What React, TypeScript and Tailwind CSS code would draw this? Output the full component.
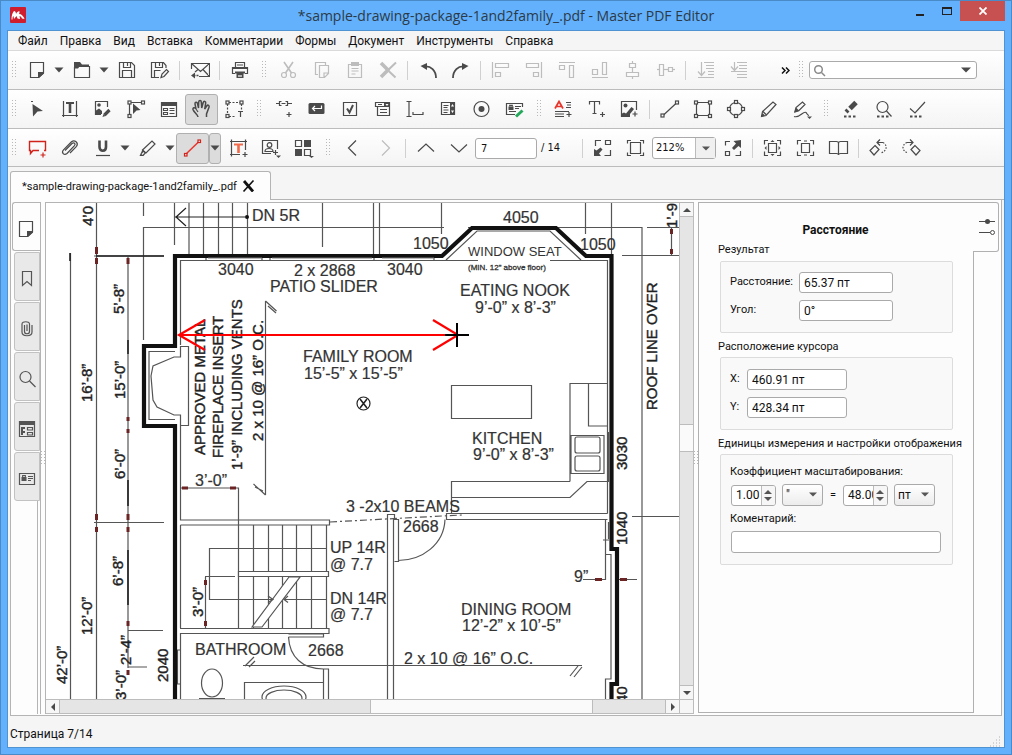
import type { ReactNode } from "react";

interface IconProps {
  children: ReactNode;
}

interface ToolProps {
  label: string;
  icon: ReactNode;
  active?: boolean;
  disabled?: boolean;
}

function Icon({ children }: IconProps) {
  return (
    <svg className="h-[20px] w-[21px]" viewBox="0 0 21 20" fill="none" stroke="currentColor" strokeWidth={1.2} aria-hidden="true">
      {children}
    </svg>
  );
}

function Tool({ label, icon, active, disabled }: ToolProps) {
  return (
    <button
      type="button"
      aria-label={label}
      disabled={disabled}
      className={
        active
          ? "flex h-[31px] w-[33px] shrink-0 items-center justify-center rounded-[3px] border border-[#b0b0b0] bg-[#dcdcdc] text-[#4a4a4a]"
          : "flex h-[31px] w-[33px] shrink-0 items-center justify-center text-[#4a4a4a] disabled:text-[#bdbdbd]"
      }
    >
      {icon}
    </button>
  );
}

function Caret() {
  return (
    <svg className="h-[6px] w-[10px]" viewBox="0 0 10 6" aria-hidden="true">
      <path d="M0 0.5h10L5 5.5z" fill="#4a4a4a" />
    </svg>
  );
}

function Drop({ label, active }: { label: string; active?: boolean }) {
  return (
    <button
      type="button"
      aria-label={label}
      className={
        active
          ? "flex h-[31px] w-[12px] shrink-0 items-center justify-center rounded-[3px] border border-[#b0b0b0] bg-[#dcdcdc]"
          : "flex h-[31px] w-[12px] shrink-0 items-center justify-center"
      }
    >
      <svg className="h-[6px] w-[10px] shrink-0" viewBox="0 0 10 6" aria-hidden="true">
        <path d="M0.5 0.5h9L5 5.5z" fill="#4a4a4a" />
      </svg>
    </button>
  );
}

function Separator() {
  return (
    <div className="flex w-[7px] shrink-0 justify-center">
      <div className="h-[19px] w-px bg-[#d0d0d0]" />
    </div>
  );
}

function Dots({ height }: { height: number }) {
  const rows = Math.floor(height / 3);
  return (
    <svg width={4} height={height} aria-hidden="true">
      {Array.from({ length: rows }, (_, i) => (
        <path key={i} d={`M0 ${i * 3 + 0.5}h1M3 ${i * 3 + 0.5}h1`} stroke="#b8b8b8" />
      ))}
    </svg>
  );
}

function Handle({ first }: { first?: boolean }) {
  return (
    <div className={first ? "flex w-[12px] shrink-0 justify-center" : "flex w-[16px] shrink-0 justify-center"}>
      <Dots height={18} />
    </div>
  );
}

const plus = (x: number, y: number, color = "currentColor") => (
  <path d={`M${x - 2.5} ${y}h5M${x} ${y - 2.5}v5`} stroke={color} />
);

const node = (x: number, y: number) => (
  <rect x={x - 1.5} y={y - 1.5} width={3} height={3} fill="#fafafa" strokeWidth={1.2} />
);

const threeDots = <path d="M4 17.5h2.5M8.5 17.5H11M13 17.5h2.5" strokeWidth={1.8} />;

const icons = {
  page: (
    <Icon>
      <path d="M4.5 2.5h13v10.5l-5 4.5h-8z" />
      <path d="M12 12h6v1.5L13 18h-1z" fill="currentColor" stroke="none" />
    </Icon>
  ),
  folder: (
    <Icon>
      <path d="M3.5 7v10.5h15V6.5H8" />
      <path d="M3 2h6l2 2.5h7V6H9L7 8.5H3z" fill="currentColor" stroke="none" />
    </Icon>
  ),
  save: (
    <Icon>
      <path d="M3.5 2.5h12l3 3v12h-15zM6.5 17.5v-7h9v7" />
      <path d="M7.5 2.5v5h7v-5M11.5 3v3" />
    </Icon>
  ),
  saveAs: (
    <Icon>
      <path d="M10 17.5H2.5v-15h12l2.5 3V8M5.5 17.5v-7h6M6.5 2.5v5h7v-5M10.5 3v3" />
      <path d="M12 17.5l1-3.5 4.5-4.5 2 2-4.5 5z" />
    </Icon>
  ),
  mail: (
    <Icon>
      <path d="M2.5 9V3.5h18v13H10M2.5 3.5l9 8 9-8M14 9.5l6 6.5M9 9.5l-3 2.5" />
      <path d="M9.5 15.5H5" strokeDasharray="2 1" strokeWidth={1.6} />
      <path d="M2 15.5l4-3v6z" fill="currentColor" stroke="none" />
    </Icon>
  ),
  print: (
    <Icon>
      <path d="M6.5 7V2.5h9V7M6 13.5H3.5v-6h15v6H16M8 5h6" />
      <path d="M3 7h16v2H3zM6 11.5h10v2H6zM7.5 13h7v5h-7z" fill="currentColor" stroke="none" />
      <path d="M9 16h4" stroke="#fff" />
    </Icon>
  ),
  cut: (
    <Icon>
      <circle cx={6} cy={15} r={2.5} />
      <circle cx={15} cy={15} r={2.5} />
      <path d="M6 2l7.5 11M15 2L7.5 13" strokeWidth={1.6} />
    </Icon>
  ),
  copy: (
    <Icon>
      <path d="M7 14.5H4.5v-12h10V5" />
      <path d="M8.5 5.5h9v8l-4 4h-5zM17 13h-4v4" />
    </Icon>
  ),
  paste: (
    <Icon>
      <path d="M4.5 4.5h13v13h-13zM7.5 8.5h7M7.5 11h7M7.5 14h4" />
      <path d="M7 2h8v4H7z" fill="currentColor" stroke="none" />
    </Icon>
  ),
  remove: (
    <Icon>
      <path d="M4 3l8 8M4 17l6-6" strokeWidth={3.6} />
      <path d="M9 8.5l9.5 9M19 2.5L9 12" strokeWidth={2} />
    </Icon>
  ),
  undo: (
    <Icon>
      <path d="M7 6.5c7-1 12 4 12 11.5" strokeWidth={1.8} />
      <path d="M3.5 6L10 3v7z" fill="currentColor" stroke="none" />
    </Icon>
  ),
  redo: (
    <Icon>
      <path d="M15 6.5c-7-1-12 4-12 11.5" strokeWidth={1.8} />
      <path d="M18.5 6L12 3v7z" fill="currentColor" stroke="none" />
    </Icon>
  ),
  alignLeft: (
    <Icon>
      <path d="M2.5 2v16M5.5 3.5h13v4h-13zM5.5 12.5h5v4h-5z" />
    </Icon>
  ),
  alignRight: (
    <Icon>
      <path d="M18.5 2v16M3.5 3.5h12v4h-12zM10.5 12.5h5v4h-5z" />
    </Icon>
  ),
  alignTop: (
    <Icon>
      <path d="M3 2.5h16M3.5 5.5h5v4h-5zM13.5 5.5h4v12h-4z" />
    </Icon>
  ),
  alignBottom: (
    <Icon>
      <path d="M3 17.5h16M3.5 9.5h5v5h-5zM13.5 2.5h4v12h-4z" />
    </Icon>
  ),
  centerH: (
    <Icon>
      <path d="M10.5 1v18" />
      <path d="M7.5 3.5h6v4h-6zM4.5 12.5h12v4h-12z" fill="#fafafa" />
    </Icon>
  ),
  centerV: (
    <Icon>
      <path d="M2 9.5h18" />
      <path d="M4.5 4.5h4v11h-4zM13.5 7.5h4v4h-4z" fill="#fafafa" />
    </Icon>
  ),
  orderDown: (
    <Icon>
      <path d="M6.5 2v13M3 11.5l3.5 4 3.5-4M3 17.5h16M9 2.5h10M11 5.5h8M11 8.5h8M13 11.5h6M13 14.5h6" />
    </Icon>
  ),
  orderUp: (
    <Icon>
      <path d="M6.5 2v8M3 6.5l3.5 4 3.5-4M9 2.5h10M11 5.5h8M11 8.5h8M3 11.5h16M9 14.5h10M9 17.5h10" />
    </Icon>
  ),
  pointer: (
    <Icon>
      <path d="M6.5 5l10.5 7-5.5.5-4.5 5z" fill="currentColor" stroke="none" />
      <path d="M5 2.5h2" />
    </Icon>
  ),
  editText: (
    <Icon>
      <path d="M4.5 2v16M17.5 2v16M3 16.5h16" />
      <path d="M7 4h8" strokeWidth={2} />
      <path d="M11 3v11" strokeWidth={2.6} />
    </Icon>
  ),
  editImage: (
    <Icon>
      <path d="M9 15.5H3.5v-13h12V8" />
      <circle cx={7} cy={6} r={1.8} fill="currentColor" stroke="none" />
      <path d="M4 15v-3.5l3-2 3 2.5v3z" fill="currentColor" stroke="none" />
      <path d="M12.5 16l5-5" strokeWidth={3.2} />
      <path d="M10.5 18l1-3 2 2z" fill="currentColor" stroke="none" />
    </Icon>
  ),
  editPath: (
    <Icon>
      <path d="M4.5 5v11M6 3.5h12" />
      {node(4.5, 3.5)}
      {node(18, 3.5)}
      {node(4.5, 17)}
      <path d="M8 4.5l7.5 6.5-4 .5L8 15z" fill="currentColor" stroke="none" />
    </Icon>
  ),
  editForm: (
    <Icon>
      <path d="M3.5 3.5h15v14h-15z" />
      <path d="M3 3h16v4H3z" fill="currentColor" stroke="none" />
      <path d="M5.5 9.5h4v2h-4zM5.5 13.5h4v2h-4zM11.5 9.5h5M11.5 11.5h5M11.5 14.5h5" strokeWidth={1.1} />
    </Icon>
  ),
  hand: (
    <Icon>
      <path
        d="M7 18c0-2-4-4.5-5-7.5-.5-2 2-2.5 3-.5L4 5c-.2-2 2-2.5 2.500-.5L7.500 9 7.700 3c.2-2 2.500-2 2.600 0l.4 6 1.500-5.500c.6-1.900 2.700-1.200 2.500.5L13.700 10l2-3c1.200-1.700 3-.5 2.300 1.200L15.500 15v3"
        strokeWidth={1.5}
      />
      <path d="M5 10l2 3" />
    </Icon>
  ),
  marquee: (
    <Icon>
      <path d="M5 3.5h11M5 17.5h6M3.5 5v11M17.5 5v6" strokeDasharray="2 1.5" />
      {node(3.5, 3.5)}
      {node(17.5, 3.5)}
      {node(3.5, 17)}
      <path d="M14 12.5h5M16.5 12.5V18" />
    </Icon>
  ),
  linkTool: (
    <Icon>
      <path d="M3 4.5h3M8.5 2.5H6.5v4h2M12.5 2.5h2v4h-2M8.5 4.5h4M15 4.5h4" />
      {plus(16, 15.5)}
    </Icon>
  ),
  pushButton: (
    <Icon>
      <rect x={2.5} y={4} width={16} height={11} rx={1.5} fill="currentColor" stroke="none" />
      <path d="M15.5 6.5v3H6.5M9 7L6.5 9.5 9 12" stroke="#fff" />
    </Icon>
  ),
  checkField: (
    <Icon>
      <path d="M4.5 3.5h13v13h-13z" />
      <path d="M8 9.5l2.5 4L14 6" strokeWidth={2} />
    </Icon>
  ),
  comboField: (
    <Icon>
      <path d="M3.5 3.5h14v4h-14zM5.5 7.5h12v9h-12zM8 10.5h7M8 13.5h7M6 5.5h4" />
      <path d="M12 3h6v5h-6z" fill="currentColor" stroke="none" />
      <path d="M13.5 5h3L15 7z" fill="#fff" stroke="none" />
    </Icon>
  ),
  textField: (
    <Icon>
      <path d="M1.5 2.5h5M1.5 17.5h5M4 2.5v15M8 13v2.5h10V13" />
    </Icon>
  ),
  listField: (
    <Icon>
      <path d="M3.5 3.5h13v12h-13zM5.5 6.5h5M5.5 8.5h4M5.5 11h5M5.5 13.5h4" />
      <path d="M12 3h5v13h-5z" fill="currentColor" stroke="none" />
      <path d="M13 7.5h3L14.5 5zM13 11.5h3L14.5 14z" fill="#fff" stroke="none" />
    </Icon>
  ),
  radioField: (
    <Icon>
      <circle cx={10.5} cy={10} r={7.5} />
      <circle cx={10.5} cy={10} r={3} fill="currentColor" stroke="none" />
    </Icon>
  ),
  signField: (
    <Icon>
      <path d="M11 15.5H2.5v-11h16V8M11 7.5h6M11 9.5h4M5 12.5h7" />
      <path d="M4.5 7.5h5V11h-5z" fill="currentColor" stroke="none" />
      <path d="M5.7 7.5V6.3h2.6v1.2" />
      <path d="M12 17.5l6.5-6" stroke="#23a85c" strokeWidth={3} />
    </Icon>
  ),
  insertText: (
    <Icon>
      <path d="M2 9.5l4-7 4 7M3.5 7.5h5" stroke="#e8352c" strokeWidth={1.7} />
      <path d="M13 3.5h5M14 6h4M13 8.5h5M2 12.5h14M2 15h9M2 17.5h9" />
      {plus(16, 15.5)}
    </Icon>
  ),
  addText: (
    <Icon>
      <path d="M3.5 5.5v-3h10v3M8.5 2.5v12M6.5 14.5h4" />
      {plus(16.5, 15.5)}
    </Icon>
  ),
  addImage: (
    <Icon>
      <path d="M11 17.5H2.5v-15h15V11" />
      <circle cx={6.5} cy={6.5} r={2} fill="currentColor" stroke="none" />
      <path d="M3 17v-2.5l2-1 2 1L12.5 8l2.5 2-4 5v2z" fill="currentColor" stroke="none" />
      {plus(16, 15)}
    </Icon>
  ),
  line: (
    <Icon>
      <path d="M4 16.5L18 3.5" />
      {node(3.5, 16.5)}
      {node(18, 3.5)}
    </Icon>
  ),
  rect: (
    <Icon>
      <path d="M4.5 3.5h13v13h-13z" />
      {node(4, 3.5)}
      {node(18, 3.5)}
      {node(4, 17)}
      {node(18, 17)}
    </Icon>
  ),
  ellipse: (
    <Icon>
      <circle cx={11} cy={10} r={6.5} />
      {node(11, 3)}
      {node(11, 17)}
      {node(4, 10)}
      {node(18, 10)}
    </Icon>
  ),
  pencil: (
    <Icon>
      <path d="M3.5 17.5l1-5L15 3l3 2.5L8 16.5zM5 12.5l3 3" />
      <path d="M3 18l1.500-4 2.500 2.500z" fill="currentColor" stroke="none" />
    </Icon>
  ),
  ink: (
    <Icon>
      <path d="M4 12.5l1-4L11.5 3 14 5.5l-6 6zM3 17.5c6 2 9-6 12-4 1.500 1 .5 2.500 3 3" />
      <path d="M3 14l2-5.5L8.5 12z" fill="currentColor" stroke="none" />
      <path d="M16 17.5h5l-2.5 2.5z" fill="currentColor" stroke="none" />
    </Icon>
  ),
  eraser: (
    <Icon>
      <path d="M10 9.5l6-6" strokeWidth={5} />
      <path d="M5.5 10.5l3 3" strokeWidth={2.6} />
      {threeDots}
    </Icon>
  ),
  find: (
    <Icon>
      <circle cx={9.5} cy={8} r={5.5} />
      <path d="M13.5 12l5 5.5" />
      {threeDots}
    </Icon>
  ),
  check: (
    <Icon>
      <path d="M4 9.5l5 4.5L19 3" />
      {threeDots}
    </Icon>
  ),
  comment: (
    <Icon>
      <path d="M13 12.5H7l-2.5 3v-3h-1v-9h16v9H18" stroke="#d0231b" strokeWidth={1.4} />
      {plus(17, 17, "#d0231b")}
    </Icon>
  ),
  clip: (
    <Icon>
      <path d="M6 12.5l7-7c2-1.7 4 .3 2.5 2.2L8 15.5c-3 2.5-6-1-3.5-3.7l8-8c3-2.7 7.5 1 5 4.5L11 15" strokeWidth={1.2} />
    </Icon>
  ),
  underline: (
    <Icon>
      <path d="M7.5 2.5V9c0 5 6.5 5 6.5 0V2.5" strokeWidth={2.6} />
      <path d="M4 17.5h14" />
    </Icon>
  ),
  marker: (
    <Icon>
      <path d="M5.5 12L15 3l3 3-9 9z" />
      <path d="M2.5 18l3-6.5L9 15l-2.5 3z" fill="currentColor" stroke="none" />
      <path d="M5 16.5l2-2" stroke="#fafafa" />
    </Icon>
  ),
  measure: (
    <Icon>
      <path d="M4 16l13-12.5" stroke="#e8352c" strokeWidth={1.5} />
      <rect x={2.5} y={15.5} width={2.5} height={2.5} stroke="#d0231b" fill="#f3f3f3" />
      <rect x={16} y={2} width={2.5} height={2.5} stroke="#d0231b" fill="#f3f3f3" />
    </Icon>
  ),
  textBox: (
    <Icon>
      <path d="M4.5 1.5v17M18.5 1.5V12M3 3.5h17M3 16.5h10" />
      <path d="M7 6.5h9" stroke="#f06a4a" strokeWidth={2} />
      <path d="M11.5 6v9" stroke="#f06a4a" strokeWidth={2.6} />
      {plus(18, 16.5)}
    </Icon>
  ),
  stamp: (
    <Icon>
      <path d="M11 15.5H2.5v-13h15V11M5 13.5c0-4 8-4 8 0z" />
      <circle cx={9.5} cy={7} r={2.3} />
      {plus(15.5, 14.5)}
      <path d="M16 17.5h5l-2.5 2.5z" fill="currentColor" stroke="none" />
    </Icon>
  ),
  blocks: (
    <Icon>
      <path d="M2.5 2.5h6v6h-6zM11.5 11.5h6v6h-6z" />
      <path d="M11 2h7v7h-7zM2 11h7v7H2z" fill="currentColor" stroke="none" />
      <path d="M16 18h5l-2.5 2z" fill="currentColor" stroke="none" />
    </Icon>
  ),
  prev: (
    <Icon>
      <path d="M14 2.5L6.5 10l7.5 7.5" />
    </Icon>
  ),
  next: (
    <Icon>
      <path d="M7 2.5l7.5 7.5L7 17.5" />
    </Icon>
  ),
  up: (
    <Icon>
      <path d="M3 13.5L11 6l8 7.5" />
    </Icon>
  ),
  down: (
    <Icon>
      <path d="M3 6.5l8 7.5 8-7.5" />
    </Icon>
  ),
  zoomOut: (
    <Icon>
      <path d="M3.5 8V2.5H9M13.5 2.5h5v4h-5zM18.5 12v5.5h-6" />
      <path d="M2 18v-7l2.5 1.5L8.5 9.5l2 2L7 15.500 9 18z" fill="currentColor" stroke="none" />
    </Icon>
  ),
  fitPage: (
    <Icon>
      <path d="M5.5 4.5h10v11h-10zM2.5 5.5v-3H6M15 2.5h3.5v3M18.5 14.5v3H15M6 17.5H2.5v-3" />
    </Icon>
  ),
  zoomIn: (
    <Icon>
      <path d="M3.5 7.5V3.5H8M3.5 13.5h4v4h-4zM18.5 13v4.5h-5" />
      <path d="M19 2v8l-2.5-2-4.5 4-2-2 4-4.5L11.5 3z" fill="currentColor" stroke="none" />
    </Icon>
  ),
  fitWidth: (
    <Icon>
      <path d="M6.5 5.5h8v9h-8zM2.5 6.5v-4H6M15 2.5h3.5v4M18.5 13.5v4H15M6 17.5H2.5v-4" />
      <path d="M8.5 4h4l-2-2zM8.5 16h4l-2 2zM4.5 8v4l-2-2zM16.5 8v4l2-2z" fill="currentColor" stroke="none" />
    </Icon>
  ),
  fitVisible: (
    <Icon>
      <path d="M6.5 5.5h8v9h-8zM2.5 6.5v-4H6M15 2.5h3.5v4M18.5 13.5v4H15M6 17.5H2.5v-4M9 3h3M9 17h3" />
    </Icon>
  ),
  book: (
    <Icon>
      <path d="M10.5 5.5c0-1.5-1-2-2-2h-7v12h7c1 0 2 .5 2 1.5 0-1 1-1.5 2-1.5h7v-12h-7c-1 0-2 .5-2 2zM10.5 5v12" />
    </Icon>
  ),
  rotateLeft: (
    <Icon>
      <path d="M7 7.5l4 4-5 5.5-4-4.5z" />
      <path d="M9 4.5h6M12 1.5L9 4.5l3 3" />
      <path d="M15 4.5c4 2 5 8-2 10.5" strokeDasharray="1.5 1.5" />
    </Icon>
  ),
  rotateRight: (
    <Icon>
      <path d="M14 7.5l-4 4 5 5.5 4-4.5z" />
      <path d="M12 4.5H6M9 1.5l3 3-3 3" />
      <path d="M6 4.5c-5 2-6 8 1 10.5" strokeDasharray="1.5 1.5" />
    </Icon>
  ),
  bookmark: (
    <Icon>
      <path d="M5.5 2.5h9v14l-4.5-4-4.5 4z" />
    </Icon>
  ),
  paperclip: (
    <Icon>
      <path d="M7.5 6v6.5c0 3 5 3 5 0V5c0-3-7.5-3-7.5 0v8c0 5 10 5 10 0V6M10 5.5V12" strokeWidth={1.2} />
    </Icon>
  ),
  lens: (
    <Icon>
      <circle cx={8.5} cy={8} r={5.5} />
      <path d="M12.5 12l6 6" />
    </Icon>
  ),
  formPane: (
    <Icon>
      <path d="M2.5 2.5h15v15h-15z" />
      <path d="M2 2h16v4H2zM4 8h4v2H6v2h2v2H6v2H4z" fill="currentColor" stroke="none" />
      <path d="M10.5 8.5h5v2.5h-5zM10.5 13.5h5v2.5h-5z" />
    </Icon>
  ),
  signPane: (
    <Icon>
      <path d="M2.5 4.5h15v11h-15zM11 7.5h5M11 9.5h5M11 11.5h3" />
      <path d="M4.5 8h5v4h-5z" fill="currentColor" stroke="none" />
      <path d="M5.7 8V6.5h2.6V8" />
    </Icon>
  ),
  sliders: (
    <svg className="h-[20px] w-[17px]" viewBox="0 0 17 20" fill="none" stroke="#4a4a4a" aria-hidden="true">
      <path d="M0 4.5h16M0 15.5h11" />
      <circle cx={8.5} cy={4.5} r={2.5} fill="#4a4a4a" stroke="none" />
      <circle cx={13.5} cy={15.5} r={2} />
    </svg>
  ),
};

const menus = ["Файл", "Правка", "Вид", "Вставка", "Комментарии", "Формы", "Документ", "Инструменты", "Справка"];

function TitleBar() {
  return (
    <header className="flex h-[29px] shrink-0 items-start">
      <div className="flex w-[135px] items-center pt-[6px] pl-[3px]">
        <svg className="h-[16px] w-[16px]" viewBox="0 0 16 16" aria-label="Master PDF Editor">
          <rect width={16} height={16} rx={1} fill="#d01e2e" />
          <path
            d="M1.5 12.5c0-4 1-7 2.500-8.500 1.500 0 2 1.500 2 3 1-2 2.500-3 3.500-2.500 0 1 0 1.500-.5 2.500 2.500 0 4.500 2 5.500 5l-2.500-.5c-.5-1.500-1.500-2.500-2.500-2.500l.5 3-2.500-.5-1-2.500-2.500 3-.5-3c-1 1-1 2-1 3.500z"
            fill="#fff"
          />
        </svg>
      </div>
      <h1 className="flex-1 pt-[4px] text-center font-['Open_Sans',sans-serif] text-[14px] leading-[22px] whitespace-nowrap text-[#2c3a48]">
        *sample-drawing-package-1and2family_.pdf - Master PDF Editor
      </h1>
      <div className="flex w-[135px] justify-end">
        <button type="button" aria-label="Свернуть" className="flex h-[20px] w-[27px] items-center justify-center pt-[8px]">
          <span className="h-[2px] w-[8px] bg-[#222]" />
        </button>
        <button type="button" aria-label="Развернуть" className="flex h-[20px] w-[27px] items-center justify-center">
          <span className="h-[8px] w-[10px] border border-t-2 border-[#222]" />
        </button>
        <button type="button" aria-label="Закрыть" className="flex h-[20px] w-[45px] items-center justify-center bg-[#c75050]">
          <svg className="h-[8px] w-[8px]" viewBox="0 0 8 8" aria-hidden="true">
            <path d="M0.5 0.5l7 7M7.5 0.5l-7 7" stroke="#fff" strokeWidth={1.8} />
          </svg>
        </button>
      </div>
    </header>
  );
}

function Toolbars() {
  return (
    <>
      <div className="flex h-[39px] shrink-0 items-center overflow-hidden border-b border-[#bcbcbc] bg-linear-to-b from-white to-[#f4f4f4]">
        <Handle first />
        <Tool label="Создать" icon={icons.page} />
        <Drop label="Создать: варианты" />
        <Tool label="Открыть" icon={icons.folder} />
        <Drop label="Недавние файлы" />
        <Tool label="Сохранить" icon={icons.save} />
        <Tool label="Сохранить как" icon={icons.saveAs} />
        <Separator />
        <Tool label="Отправить" icon={icons.mail} />
        <Separator />
        <Tool label="Печать" icon={icons.print} />
        <Handle />
        <Tool label="Вырезать" icon={icons.cut} disabled />
        <Tool label="Копировать" icon={icons.copy} disabled />
        <Tool label="Вставить" icon={icons.paste} disabled />
        <Tool label="Удалить" icon={icons.remove} disabled />
        <Separator />
        <Tool label="Отменить" icon={icons.undo} />
        <Tool label="Повторить" icon={icons.redo} />
        <Separator />
        <Tool label="По левому краю" icon={icons.alignLeft} disabled />
        <Tool label="По правому краю" icon={icons.alignRight} disabled />
        <Tool label="По верхнему краю" icon={icons.alignTop} disabled />
        <Tool label="По нижнему краю" icon={icons.alignBottom} disabled />
        <Tool label="Центр по горизонтали" icon={icons.centerH} disabled />
        <Tool label="Центр по вертикали" icon={icons.centerV} disabled />
        <Separator />
        <Tool label="На задний план" icon={icons.orderDown} disabled />
        <Tool label="На передний план" icon={icons.orderUp} disabled />
        <button type="button" aria-label="Ещё" className="ml-[22px] flex h-[31px] w-[16px] shrink-0 items-center justify-center">
          <svg className="h-[7px] w-[9px]" viewBox="0 0 9 7" fill="none" stroke="#111" strokeWidth={1.5} aria-hidden="true">
            <path d="M1 0.5l3 3-3 3M5 0.5l3 3-3 3" />
          </svg>
        </button>
        <Handle />
        <div className="flex h-[18px] w-[168px] shrink-0 items-center rounded-[3px] border border-[#aaa] bg-white pr-[5px] pl-[3px]">
          <svg className="h-[13px] w-[13px] shrink-0" viewBox="0 0 13 13" fill="none" stroke="#8a8a8a" strokeWidth={1.5} aria-hidden="true">
            <circle cx={5.5} cy={5.5} r={3.8} />
            <path d="M8.5 8.5l3.5 3.5" />
          </svg>
          <input type="text" aria-label="Поиск" className="min-w-0 flex-1 bg-transparent outline-none" />
          <Caret />
        </div>
      </div>

      <div className="flex h-[39px] shrink-0 items-center overflow-hidden border-b border-[#bcbcbc] bg-linear-to-b from-white to-[#f4f4f4]">
        <Handle first />
        <Tool label="Выделение" icon={icons.pointer} />
        <Tool label="Правка текста" icon={icons.editText} />
        <Tool label="Правка изображений" icon={icons.editImage} />
        <Tool label="Правка контуров" icon={icons.editPath} />
        <Tool label="Правка форм" icon={icons.editForm} />
        <Tool label="Рука" icon={icons.hand} active />
        <Tool label="Выделить текст" icon={icons.marquee} />
        <Handle />
        <Tool label="Ссылка" icon={icons.linkTool} />
        <Tool label="Кнопка" icon={icons.pushButton} />
        <Tool label="Флажок" icon={icons.checkField} />
        <Tool label="Выпадающий список" icon={icons.comboField} />
        <Tool label="Текстовое поле" icon={icons.textField} />
        <Tool label="Список" icon={icons.listField} />
        <Tool label="Переключатель" icon={icons.radioField} />
        <Tool label="Подпись" icon={icons.signField} />
        <Handle />
        <Tool label="Вставить текст" icon={icons.insertText} />
        <Tool label="Добавить текст" icon={icons.addText} />
        <Tool label="Добавить изображение" icon={icons.addImage} />
        <Separator />
        <Tool label="Линия" icon={icons.line} />
        <Tool label="Прямоугольник" icon={icons.rect} />
        <Tool label="Эллипс" icon={icons.ellipse} />
        <Tool label="Карандаш" icon={icons.pencil} />
        <Tool label="Рукописный ввод" icon={icons.ink} />
        <Handle />
        <Tool label="Очистить" icon={icons.eraser} />
        <Tool label="Найти" icon={icons.find} />
        <Tool label="Применить" icon={icons.check} />
      </div>

      <div className="flex h-[38px] shrink-0 items-center overflow-hidden border-b border-[#bcbcbc] bg-linear-to-b from-white to-[#f4f4f4] pt-px">
        <Handle first />
        <Tool label="Комментарий" icon={icons.comment} />
        <Tool label="Вложение" icon={icons.clip} />
        <Tool label="Подчёркивание" icon={icons.underline} />
        <Drop label="Подчёркивание: варианты" />
        <Tool label="Маркер" icon={icons.marker} />
        <Drop label="Маркер: варианты" />
        <Tool label="Расстояние" icon={icons.measure} active />
        <Drop label="Измерения" active />
        <Tool label="Текстовое примечание" icon={icons.textBox} />
        <Tool label="Штамп" icon={icons.stamp} />
        <Tool label="Блоки" icon={icons.blocks} />
        <Handle />
        <Tool label="Назад" icon={icons.prev} />
        <Tool label="Вперёд" icon={icons.next} disabled />
        <Separator />
        <Tool label="Предыдущая страница" icon={icons.up} />
        <Tool label="Следующая страница" icon={icons.down} />
        <input
          type="text"
          aria-label="Номер страницы"
          defaultValue="7"
          className="h-[21px] w-[62px] shrink-0 rounded-[3px] border border-[#aaa] bg-white px-[5px] outline-none"
        />
        <span className="w-[42px] shrink-0 pl-1">/ 14</span>
        <Separator />
        <Tool label="Уменьшить" icon={icons.zoomOut} />
        <Tool label="Страница целиком" icon={icons.fitPage} />
        <div className="relative h-[22px] w-[64px] shrink-0">
          <select
            aria-label="Масштаб"
            className="h-full w-full appearance-none rounded-[3px] border border-[#aaa] bg-white pl-[3px] outline-none"
          >
            <option>212%</option>
          </select>
          <div className="pointer-events-none absolute inset-y-px right-px flex w-[20px] items-center justify-center border-l border-[#bbb] bg-[#f0f0f0]">
            <svg className="h-[5px] w-[8px]" viewBox="0 0 8 5" aria-hidden="true">
              <path d="M0 0.5h8L4 4.5z" fill="#555" />
            </svg>
          </div>
        </div>
        <Tool label="Увеличить" icon={icons.zoomIn} />
        <Separator />
        <Tool label="По ширине" icon={icons.fitWidth} />
        <Tool label="По видимой части" icon={icons.fitVisible} />
        <Tool label="Разворот" icon={icons.book} />
        <Separator />
        <Tool label="Повернуть влево" icon={icons.rotateLeft} />
        <Tool label="Повернуть вправо" icon={icons.rotateRight} />
      </div>
    </>
  );
}

const sideTabs = [
  { label: "Страницы", icon: icons.page },
  { label: "Закладки", icon: icons.bookmark },
  { label: "Вложения", icon: icons.paperclip },
  { label: "Поиск", icon: icons.lens },
  { label: "Формы", icon: icons.formPane },
  { label: "Подписи", icon: icons.signPane },
];

function SideTabs() {
  return (
    <nav className="flex w-[30px] shrink-0 flex-col border-r border-[#b4b4b4]">
      {sideTabs.map((tab, i) => (
        <button
          key={tab.label}
          type="button"
          aria-label={tab.label}
          className={
            i === 0
              ? "ml-px flex h-[49px] items-center justify-center rounded-l-[3px] border border-r-0 border-[#b4b4b4] bg-[#fdfdfd] pt-[5px] pr-[3px] text-[#4a4a4a]"
              : "mt-px ml-[3px] flex h-[49px] items-center justify-center rounded-l-[3px] border border-[#c2c2c2] bg-[#e9e9e9] pt-[5px] text-[#555]"
          }
        >
          {tab.icon}
        </button>
      ))}
      <div className="ml-[26px] flex-1 border-l border-[#b4b4b4]" />
    </nav>
  );
}

const labels: { x: number; y: number; text: string }[] = [
  { x: 252, y: 221, text: "DN 5R" },
  { x: 218, y: 275, text: "3040" },
  { x: 294, y: 276, text: "2 x 2868" },
  { x: 387, y: 275, text: "3040" },
  { x: 270, y: 292, text: "PATIO SLIDER" },
  { x: 413, y: 249, text: "1050" },
  { x: 503, y: 223, text: "4050" },
  { x: 580, y: 250, text: "1050" },
  { x: 460, y: 296, text: "EATING NOOK" },
  { x: 475, y: 313, text: "9’-0” x 8’-3”" },
  { x: 303, y: 362, text: "FAMILY ROOM" },
  { x: 304, y: 379, text: "15’-5” x 15’-5”" },
  { x: 472, y: 444, text: "KITCHEN" },
  { x: 473, y: 460, text: "9’-0” x 8’-3”" },
  { x: 195, y: 486, text: "3’-0”" },
  { x: 346, y: 512, text: "3 -2x10 BEAMS" },
  { x: 403, y: 532, text: "2668" },
  { x: 330, y: 553, text: "UP 14R" },
  { x: 330, y: 570, text: "@ 7.7" },
  { x: 330, y: 604, text: "DN 14R" },
  { x: 330, y: 620, text: "@ 7.7" },
  { x: 461, y: 615, text: "DINING ROOM" },
  { x: 462, y: 631, text: "12’-2” x 10’-5”" },
  { x: 404, y: 664, text: "2 x 10 @ 16” O.C." },
  { x: 195, y: 655, text: "BATHROOM" },
  { x: 308, y: 656, text: "2668" },
  { x: 574, y: 582, text: "9”" },
];

const verticalLabels: { x: number; y: number; text: string }[] = [
  { x: 93, y: 226, text: "4’0" },
  { x: 124, y: 314, text: "5’-8”" },
  { x: 92, y: 402, text: "16’-8”" },
  { x: 125, y: 399, text: "15’-0”" },
  { x: 125, y: 479, text: "6’-0”" },
  { x: 123, y: 586, text: "6’-8”" },
  { x: 92, y: 635, text: "12’-0”" },
  { x: 67, y: 684, text: "42’-0”" },
  { x: 131, y: 665, text: "2’-4”" },
  { x: 126, y: 700, text: "3’-0”" },
  { x: 168, y: 682, text: "2040" },
  { x: 203, y: 617, text: "3’-0”" },
  { x: 205, y: 455, text: "APPROVED METAL" },
  { x: 223, y: 458, text: "FIREPLACE INSERT" },
  { x: 242, y: 470, text: "1’-9” INCLUDING VENTS" },
  { x: 263, y: 441, text: "2 x 10 @ 16” O.C." },
  { x: 657, y: 410, text: "ROOF LINE OVER" },
  { x: 627, y: 470, text: "3030" },
  { x: 627, y: 545, text: "1040" },
  { x: 627, y: 703, text: "40" },
  { x: 677, y: 228, text: "1’-9" },
];

function FloorPlan() {
  return (
    <svg className="block h-full w-full" viewBox="46 203 633 497" preserveAspectRatio="xMinYMin slice" fill="none" role="img" aria-label="План этажа">
      <rect x={46} y={203} width={633} height={497} fill="#fff" />

      {/* thin lines: dimensions, stairs, fixtures */}
      <g stroke="#555" strokeWidth={1.2}>
        <path d="M70.5 253V700M96.5 203V700M128 257V668M143.5 203v13M143.5 227v113M143 227.5H444M468 227.5H642M642 227V700" />
        <path d="M174.5 203v42M189 203v51M203.5 203v51M218.5 203v51M232.5 203v51M247.5 203v51M322.5 203v44M373.5 203v52M379.5 203v52M441.5 203v31M585.5 203v31M611.5 203v51" />
        <path d="M647 227.5h32M622 255.5h57M671.5 228v27M632 516.5h47" />
        <path d="M94 256h70M94 522.5h70M128 630.5h35M128 667h19" />
        <path d="M180.5 345V260.5H440M446 260l31-29h73l31 29M440 260.5h38M550 260.5h57.5v253" />
        <path d="M175 351.5h-26v68h26M180 346.5h8.5v79H180M180.5 346v11H174l-21 9-2 10 2 24 4 7 17 8h6.500v105h149v5h-149" />
        <path d="M265.5 301v194M265.5 301l11 10M268 306l8 7M265.5 495l-12-11M255 487l8 4" />
        <path d="M451.5 385.5h80v33h-80zM607 383.5h-37v98M588.5 383v43h19M571 435.5h33v38h-33zM607 481.5h-20l-17 16H451.5M570 481.5H451.5V513M446 513.5h161.5M446 519.5h161.5M446.5 513v6" />
        <rect x={575} y={437} width={25} height={16} rx={2} />
        <rect x={575} y={456} width={25} height={15} rx={2} />
        <path d="M387.5 700V514.5h7M393.5 519v181M394.5 514v5M394 519.5h4.5v42h-4M398 560.5c24 0 46-16 47-41" />
        <path d="M180.5 525v103M180 628.5h149v5H180.5V700M238.5 525v103M253.5 525v103M268.5 525v103M282.5 525v103M296.5 525v103M311.5 525v103M326.5 525v103" />
        <path d="M252 627l37-50h11l-38 50z" fill="#fff" />
        <path d="M238.5 571.5h90v5h-90z" fill="#fff" />
        <path d="M326 548.5H209.5v51h63M268 596l5 3.5-5 3M326 599.5h-42M288 596l-4 3.5 4 3" />
        <path d="M205 576.5h30M205.5 577v51M180 488h58.5v37" />
        <path d="M288.5 634h35v3h-35M288.5 637c1 20 14 32 35 32M243 665.5h339M323.5 669v31M328.5 669v31M323 669h6M244.5 700v-17.5h79" />
        <path d="M570 676l8-10M574 677l8-10M245 666l9-9M249 667l6-6M199 698.5h26" />
        <ellipse cx={212} cy={683} rx={10.5} ry={14} />
        <ellipse cx={284} cy={697} rx={22} ry={11} />
        <ellipse cx={284} cy={698} rx={18} ry={8} />
        <path d="M605.5 519v61M605 554.5h6V679h-5.5v21M608.5 522v17M603 540h6M583 579.5h23M619 579.5h18" />
        <path d="M608.5 432v50M175 650h5M175 684h5M177.5 650v34M206 257v4M262 257v4M270 257v4M374 257v4M434 257v4" />
        <path d="M330 522l112-6 20-1" strokeDasharray="7 3 2 3" />
        <path d="M175 217h70M186 208l-10 9 10 9" stroke="#222" />
        <circle cx={363.5} cy={403.5} r={6.5} stroke="#222" />
        <path d="M360 399l7 9M367 399l-7 9" stroke="#222" strokeWidth={1.6} />
      </g>
      <circle cx={247} cy={217} r={2} fill="#111" />
      <path d="M96 256h68M128 340v14M128 480v26M128 550v55M70 253v8" stroke="#222" strokeWidth={1.6} />
      <path
        d="M96.5 247v7M96.5 258v6M128 258v6M128 417v4M128 429v4M96.5 514v6M96.5 527v5M128 514v6M128 527v5M128 621v5M128 670v5M671.5 229v5M671.5 249v5M182 488h6M230 488h6M205.5 580v5M205.5 621v5M595 579.5h7M620 579.5h7"
        stroke="#6b2424"
        strokeWidth={3}
      />

      {/* outer walls */}
      <path
        d="M175 700V426h-31v-80h31V256H442l30-28h84l30 28h25.5v293h5.5v135h-5.5v16"
        stroke="#111"
        strokeWidth={4.2}
      />
      <path d="M208 258h54M272 258h100M382 258h52" stroke="#777" />

      <g fill="#333" stroke="#333" strokeWidth={0.2} className="font-['Liberation_Sans',sans-serif] text-[16px]">
        {labels.map((l) => (
          <text key={`${l.x}-${l.y}`} x={l.x} y={l.y}>
            {l.text}
          </text>
        ))}
      </g>
      <g fill="#222" stroke="#222" strokeWidth={0.4} className="font-['Liberation_Sans',sans-serif] text-[15px]">
        {verticalLabels.map((l) => (
          <text key={`${l.x}-${l.y}`} transform={`translate(${l.x} ${l.y}) rotate(-90)`}>
            {l.text}
          </text>
        ))}
      </g>
      <g fill="#333" className="font-['Liberation_Sans',sans-serif]">
        <text x={468} y={256} className="text-[13px]">
          WINDOW SEAT
        </text>
        <text x={468} y={270} className="text-[8px]" stroke="#333" strokeWidth={0.3}>
          (MIN. 12” above floor)
        </text>
      </g>

      {/* distance measurement and crosshair */}
      <path d="M179 335H457M205 320l-26 15 26 15M433 320l25 15-25 15" stroke="#f00" strokeWidth={2.2} />
      <path d="M445 335h24M457 323v24" stroke="#000" strokeWidth={2} />
    </svg>
  );
}

function ScrollArrow({ d, label, className }: { d: string; label: string; className: string }) {
  return (
    <button type="button" aria-label={label} className={className}>
      <svg className="h-[8px] w-[8px]" viewBox="0 0 8 8" aria-hidden="true">
        <path d={d} fill="#4a4a4a" />
      </svg>
    </button>
  );
}

function DocumentView() {
  return (
    <main className="flex min-w-0 flex-1 flex-col border-t border-l border-[#b4b4b4]">
      <div className="flex min-h-0 flex-1">
        <div className="min-w-0 flex-1 overflow-hidden">
          <FloorPlan />
        </div>
        <div className="flex w-[15px] shrink-0 flex-col border-x border-[#bcbcbc] bg-[#e5e5e5]">
          <ScrollArrow label="Вверх" d="M0 6l4-4 4 4z" className="flex h-[14px] shrink-0 items-center justify-center border-b border-[#bcbcbc] bg-[#f6f6f6]" />
          <div className="flex-[208]" />
          <div className="h-[28px] border-y border-[#bcbcbc] bg-[#fafafa]" />
          <div className="flex-[235]" />
          <ScrollArrow label="Вниз" d="M0 2l4 4 4-4z" className="flex h-[14px] shrink-0 items-center justify-center border-t border-[#bcbcbc] bg-[#f6f6f6]" />
        </div>
      </div>
      <div className="flex h-[15px] shrink-0 border-y border-r border-[#bcbcbc] bg-[#e5e5e5]">
        <ScrollArrow label="Влево" d="M6 0L2 4l4 4z" className="flex w-[14px] shrink-0 items-center justify-center border-r border-[#bcbcbc] bg-[#f6f6f6]" />
        <div className="flex-[312]" />
        <div className="flex-[222] border-x border-[#bcbcbc] bg-[#fafafa]" />
        <div className="flex-[72]" />
        <ScrollArrow label="Вправо" d="M2 0l4 4-4 4z" className="flex w-[14px] shrink-0 items-center justify-center border-l border-[#bcbcbc] bg-[#f6f6f6]" />
        <div className="w-[14px] shrink-0 border-l border-[#bcbcbc] bg-[#f6f6f6]" />
      </div>
    </main>
  );
}

const fieldClass = "h-[21px] rounded-[3px] border border-[#aaa] bg-white px-[4px] text-[12px] outline-none";

function Spin({ label, value }: { label: string; value: string }) {
  return (
    <div className="flex h-[21px] w-[45px] shrink-0 overflow-hidden rounded-[3px] border border-[#aaa] bg-white">
      <input type="text" aria-label={label} defaultValue={value} className="w-[29px] min-w-0 pl-[4px] text-[12px] outline-none" />
      <div className="flex flex-1 flex-col justify-center gap-[3px] border-l border-[#bbb] bg-[#f6f6f6] pl-[2px]">
        <button type="button" aria-label="Больше">
          <svg className="block h-[4px] w-[8px]" viewBox="0 0 8 4" aria-hidden="true">
            <path d="M0 4l4-4 4 4z" fill="#555" />
          </svg>
        </button>
        <button type="button" aria-label="Меньше">
          <svg className="block h-[4px] w-[8px]" viewBox="0 0 8 4" aria-hidden="true">
            <path d="M0 0l4 4 4-4z" fill="#555" />
          </svg>
        </button>
      </div>
    </div>
  );
}

function UnitSelect({ label, value }: { label: string; value: string }) {
  return (
    <div className="relative h-[22px] w-[41px] shrink-0">
      <select
        aria-label={label}
        className="h-full w-full appearance-none rounded-[3px] border border-[#aaa] bg-linear-to-b from-white to-[#ececec] pl-[3px] text-[12px] outline-none"
      >
        <option>{value}</option>
      </select>
      <svg className="pointer-events-none absolute top-[8px] right-[6px] h-[5px] w-[8px]" viewBox="0 0 8 5" aria-hidden="true">
        <path d="M0 0.5h8L4 4.5z" fill="#555" />
      </svg>
    </div>
  );
}

function DistancePanel() {
  return (
    <aside className="flex shrink-0 pr-[2px] pb-px font-['Roboto',sans-serif] text-[11px]">
      <form className="w-[276px] border border-[#b0b0b0] pt-[19px] pr-[20px] pl-[19px]">
        <h2 className="text-center text-[12px] font-bold leading-4">Расстояние</h2>

        <h3 className="mt-1 leading-4">Результат</h3>
        <div className="mt-[3px] ml-[2px] flex h-[72px] flex-col gap-[7px] rounded-[2px] border border-[#dcdcdc] bg-[#f9f9f9] pt-[10px] pl-[9px]">
          <div className="flex items-center">
            <label htmlFor="distance" className="w-[69px]">Расстояние:</label>
            <input id="distance" type="text" defaultValue="65.37 пт" className={`${fieldClass} w-[94px]`} />
          </div>
          <div className="flex items-center">
            <label htmlFor="angle" className="w-[69px]">Угол:</label>
            <input id="angle" type="text" defaultValue="0°" className={`${fieldClass} w-[94px]`} />
          </div>
        </div>

        <h3 className="mt-[6px] leading-4">Расположение курсора</h3>
        <div className="mt-[2px] ml-[2px] flex h-[73px] flex-col gap-[7px] rounded-[2px] border border-[#dcdcdc] bg-[#f9f9f9] pt-[11px] pl-[9px]">
          <div className="flex items-center">
            <label htmlFor="cursor-x" className="w-[17px]">X:</label>
            <input id="cursor-x" type="text" defaultValue="460.91 пт" className={`${fieldClass} w-[100px]`} />
          </div>
          <div className="flex items-center">
            <label htmlFor="cursor-y" className="w-[17px]">Y:</label>
            <input id="cursor-y" type="text" defaultValue="428.34 пт" className={`${fieldClass} w-[100px]`} />
          </div>
        </div>

        <h3 className="-mr-3 mt-[6px] leading-4 whitespace-nowrap">Единицы измерения и настройки отображения</h3>
        <div className="mt-[2px] ml-[2px] rounded-[2px] border border-[#dcdcdc] bg-[#f9f9f9] pt-[9px] pr-[11px] pb-[11px] pl-[9px]">
          <p className="leading-4">Коэффициент масштабирования:</p>
          <div className="mt-1 flex items-center pl-px">
            <Spin label="Исходное значение" value="1.00" />
            <div className="w-[6px]" />
            <UnitSelect label="Исходные единицы" value={'"'} />
            <span className="w-[20px] text-center">=</span>
            <Spin label="Итоговое значение" value="48.00" />
            <div className="w-[6px]" />
            <UnitSelect label="Итоговые единицы" value="пт" />
          </div>
          <label htmlFor="note" className="mt-[5px] block leading-4">Коментарий:</label>
          <input id="note" type="text" className="mt-[4px] ml-px h-[22px] w-[210px] rounded-[3px] border border-[#aaa] bg-white px-1 outline-none" />
        </div>
      </form>
      <button
        type="button"
        aria-label="Свойства"
        className="-ml-px flex h-[50px] w-[26px] items-center rounded-r-[3px] border border-l-0 border-[#b0b0b0] bg-[#fdfdfd] pl-[6px]"
      >
        {icons.sliders}
      </button>
    </aside>
  );
}

export default function App() {
  return (
    <div className="flex h-screen flex-col border border-[#4a8ac6] bg-[#63b1fc] px-[6px] pb-[6px] font-['DejaVu_Sans_Condensed','DejaVu_Sans',sans-serif] text-[11px] text-[#111]">
      <TitleBar />
      <div className="flex min-h-0 flex-1 flex-col border border-[#4f93d3] bg-[#f5f5f5]">
        <nav className="flex h-[20px] shrink-0 items-center gap-[12px] border-b border-[#dadada] pl-[10px] font-['Roboto',sans-serif] text-[12px]">
          {menus.map((m) => (
            <button key={m} type="button" className="leading-4 whitespace-nowrap">
              {m}
            </button>
          ))}
        </nav>

        <Toolbars />

        <div className="flex h-[33px] shrink-0 pl-[2px] pt-[4px]">
          <div className="flex w-[261px] items-center rounded-t-[3px] border border-b-0 border-[#b4b4b4] bg-[#fdfdfd] pl-[11px]">
            <span className="w-[220px] pt-[2px] whitespace-nowrap font-['Roboto',sans-serif]">*sample-drawing-package-1and2family_.pdf</span>
            <button type="button" aria-label="Закрыть вкладку">
              <svg className="block h-[12px] w-[13px]" viewBox="0 0 13 12" aria-hidden="true">
                <path d="M11.5 0.5L1.5 11.5" stroke="#111" strokeWidth={1.6} />
                <path d="M2 1l9 10.5" stroke="#111" strokeWidth={2.8} />
              </svg>
            </button>
          </div>
          <div className="flex-1 border-b border-[#b4b4b4]" />
        </div>

        <div className="mr-[2px] ml-[2px] flex min-h-0 flex-1 border-x border-b border-[#b4b4b4] bg-[#fdfdfd] pt-[2px] pb-px">
          <SideTabs />
          <div className="flex w-[4px] shrink-0 items-center overflow-hidden">
            <Dots height={15} />
          </div>
          <DocumentView />
          <div className="flex w-[4px] shrink-0 items-center overflow-hidden">
            <Dots height={15} />
          </div>
          <DistancePanel />
        </div>

        <footer className="flex h-[31px] shrink-0 items-center justify-between pr-[3px] pl-[2px] font-['Roboto',sans-serif] text-[12px]">
          <span className="pt-[4px]">Страница 7/14</span>
          <svg className="h-[11px] w-[11px] self-end" viewBox="0 0 11 11" aria-hidden="true">
            <path d="M9 1h1M6 4h1M9 4h1M3 7h1M6 7h1M9 7h1M0 10h1M3 10h1M6 10h1M9 10h1" stroke="#b0b0b0" />
          </svg>
        </footer>
      </div>
    </div>
  );
}
